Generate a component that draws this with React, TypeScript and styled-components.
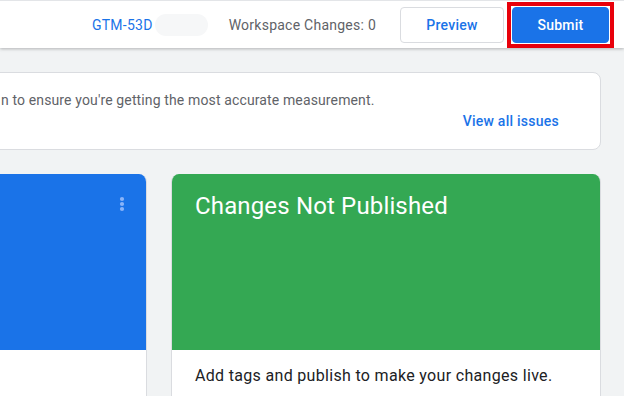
import React from "react";
import styled, { createGlobalStyle } from "styled-components";

const GlobalStyle = createGlobalStyle`
  *, *::before, *::after {
    box-sizing: border-box;
  }
  body {
    margin: 0;
    background: #f1f3f4;
    font-family: Roboto, "Liberation Sans", sans-serif;
    overflow: hidden;
  }
`;

const Page = styled.div`
  width: 624px;
  height: 396px;
  overflow: hidden;
`;

const TopBar = styled.header`
  height: 48px;
  border-top: 1px solid #e3e5e8;
  background: #fff;
  box-shadow: 0 1px 3px rgba(60, 64, 67, 0.35);
  display: flex;
  align-items: center;
  justify-content: flex-end;
  padding-right: 10px;
  position: relative;
  z-index: 1;
`;

const ContainerId = styled.div`
  display: flex;
  align-items: center;
  margin-right: 21px;
`;

const IdText = styled.span`
  font-size: 14px;
  letter-spacing: 0.25px;
  color: #1a73e8;
  padding-top: 1px;
`;

const Redacted = styled.span`
  width: 53px;
  height: 22px;
  margin-left: 2px;
  border-radius: 11px;
  background: #f6f7f8;
`;

const ChangesCount = styled.span`
  font-size: 14px;
  letter-spacing: 0.25px;
  color: #5f6368;
  margin-right: 24px;
  padding-top: 1px;
`;

const Button = styled.button<{ $primary?: boolean }>`
  display: block;
  height: 36px;
  padding: 0;
  border-radius: 4px;
  font-family: Roboto, "Liberation Sans", sans-serif;
  font-size: 14px;
  font-weight: 500;
  letter-spacing: 0.25px;
  cursor: pointer;
  border: 1px solid ${(p) => (p.$primary ? "#1a73e8" : "#dadce0")};
  background: ${(p) => (p.$primary ? "#1a73e8" : "#fff")};
  color: ${(p) => (p.$primary ? "#fff" : "#1a73e8")};
  width: ${(p) => (p.$primary ? "97px" : "104px")};
`;

const Highlight = styled.span`
  display: block;
  margin-left: 3px;
  padding: 1px;
  border: 4px solid #e8000b;
`;

const Main = styled.main`
  margin-left: -283px;
  width: 884px;
  padding-top: 24px;
  display: flex;
  flex-direction: column;
  gap: 24px;
`;

const Notice = styled.section`
  height: 78px;
  background: #fff;
  border: 1px solid #dadce0;
  border-radius: 8px;
  padding: 17px 41px 0 283px;
  display: flex;
  flex-direction: column;
`;

const NoticeText = styled.p`
  margin: 0;
  font-size: 14px;
  line-height: 20px;
  letter-spacing: 0.13px;
  color: #5f6368;
`;

const NoticeLink = styled.a`
  align-self: flex-end;
  font-size: 14px;
  font-weight: 500;
  line-height: 20px;
  letter-spacing: 0.25px;
  color: #1a73e8;
  text-decoration: none;
  margin-top: 1px;
`;

const CardRow = styled.div`
  display: grid;
  grid-template-columns: 430px 430px;
  gap: 24px;
`;

const Card = styled.article`
  border-radius: 8px;
  overflow: hidden;
  background: #fff;
  border: 1px solid #dadce0;
  border-top: none;
  height: 240px;
`;

const CardHead = styled.div<{ $color: string }>`
  height: 176px;
  margin: 0 -1px;
  background: ${(p) => p.$color};
  padding: 16px 24px 0;
  display: flex;
  justify-content: space-between;
  align-items: flex-start;
`;

const CardTitle = styled.h2`
  margin: 0;
  font-family: Roboto, "Liberation Sans", sans-serif;
  font-weight: 400;
  font-size: 24px;
  line-height: 32px;
  letter-spacing: 0.15px;
  color: #fff;
`;

const MenuIcon = styled.svg`
  margin: 2px -11px 0 auto;
`;

const CardBody = styled.p`
  margin: 0;
  padding: 14px 23px;
  font-size: 16px;
  line-height: 24px;
  letter-spacing: 0.32px;
  color: #202124;
`;

const Kebab = () => (
  <MenuIcon width="24" height="24" viewBox="0 0 24 24">
    <g fill="#8ab4f8">
      <circle cx="12" cy="7" r="2.1" />
      <circle cx="12" cy="12" r="2.1" />
      <circle cx="12" cy="17" r="2.1" />
    </g>
  </MenuIcon>
);

export default function App() {
  return (
    <Page>
      <GlobalStyle />
      <TopBar>
        <ContainerId>
          <IdText>GTM-53D</IdText>
          <Redacted />
        </ContainerId>
        <ChangesCount>Workspace Changes: 0</ChangesCount>
        <Button>Preview</Button>
        <Highlight>
          <Button $primary>Submit</Button>
        </Highlight>
      </TopBar>
      <Main>
        <Notice>
          <NoticeText>
            n to ensure you're getting the most accurate measurement.
          </NoticeText>
          <NoticeLink href="#">View all issues</NoticeLink>
        </Notice>
        <CardRow>
          <Card>
            <CardHead $color="#1a73e8">
              <Kebab />
            </CardHead>
          </Card>
          <Card>
            <CardHead $color="#34a853">
              <CardTitle>Changes Not Published</CardTitle>
            </CardHead>
            <CardBody>Add tags and publish to make your changes live.</CardBody>
          </Card>
        </CardRow>
      </Main>
    </Page>
  );
}
